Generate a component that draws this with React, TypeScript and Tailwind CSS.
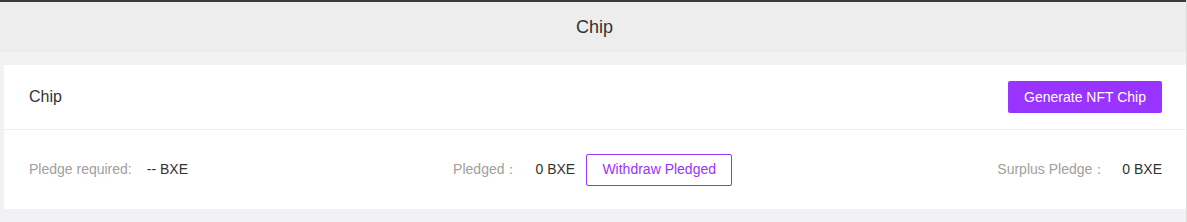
export default function App() {
  return (
    <div className="min-h-[222px] bg-[#f2f2f4] font-['Liberation_Sans',Arial,sans-serif] border-r border-[#dcdcdc] w-[1187px]">
      <div className="h-[2px] bg-[#3a3a3a]" />
      <div className="h-[50px] bg-[#ededed] flex items-center justify-center pl-[3px] text-[18px] text-[#333]">
        Chip
      </div>
      <div className="pt-[13px] pl-[4px]">
        <div className="bg-white">
          <div className="h-[65px] flex items-center justify-between pl-[25px] pr-[24px] border-b border-[#eeeeee]">
            <span className="text-[16px] text-[#333]">Chip</span>
            <button className="h-[32px] w-[154px] rounded-[2px] bg-[#9933ff] text-white text-[14px]">
              Generate NFT Chip
            </button>
          </div>
          <div className="h-[79px] flex items-center justify-between pl-[25px] pr-[24px] text-[14px]">
            <div className="flex items-center">
              <span className="text-[#a0a0a0]">Pledge required:</span>
              <span className="ml-[15px] text-[#333]">-- BXE</span>
            </div>
            <div className="flex items-center">
              <span className="text-[#a0a0a0]">Pledged：</span>
              <span className="ml-[17px] text-[#333]">0 BXE</span>
              <button className="ml-[11px] h-[32px] w-[146px] rounded-[2px] border border-[#9933ff] text-[#9933ff] text-[14px]">
                Withdraw Pledged
              </button>
            </div>
            <div className="flex items-center">
              <span className="text-[#a0a0a0]">Surplus Pledge：</span>
              <span className="ml-[16px] text-[#333]">0 BXE</span>
            </div>
          </div>
        </div>
      </div>
    </div>
  );
}
